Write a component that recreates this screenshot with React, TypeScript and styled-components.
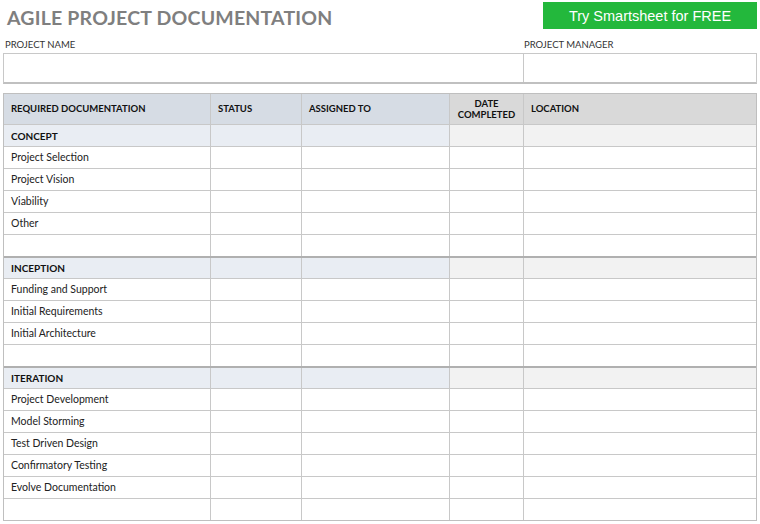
import React from "react";
import styled, { createGlobalStyle } from "styled-components";

const Global = createGlobalStyle`
  body { margin: 0; font-family: "Lato", "Liberation Sans", sans-serif; background: #fff; }
`;

const Page = styled.div`
  width: 760px;
  padding: 0 3px 0 3px;
  box-sizing: border-box;
`;

const Top = styled.div`
  display: flex;
  justify-content: space-between;
  align-items: flex-start;
  height: 34px;
  padding-top: 2px;
  box-sizing: border-box;
`;

const Title = styled.h1`
  margin: 4px 0 0 4px;
  font-size: 19.5px;
  font-weight: 700;
  color: #7f7f7f;
  letter-spacing: 0.2px;
`;

const TryButton = styled.div`
  width: 214px;
  height: 27px;
  background: #23b83c;
  color: #fff;
  font-family: "Liberation Sans", Arial, sans-serif;
  font-size: 14.5px;
  display: flex;
  align-items: center;
  justify-content: center;
`;

const Labels = styled.div`
  display: grid;
  grid-template-columns: 519px 235px;
  font-size: 9.5px;
  color: #333;
  height: 19px;
  align-items: end;
  padding-bottom: 3px;
  box-sizing: border-box;
  & > span { padding-left: 2px; }
`;

const InfoRow = styled.div`
  display: grid;
  grid-template-columns: 519px 235px;
  height: 31px;
  border: 1px solid #c8c8c8;
  border-bottom: 2px solid #c0c0c0;
  box-sizing: border-box;
  & > div + div { border-left: 1px solid #c8c8c8; }
`;

const Table = styled.div`
  margin-top: 9px;
  border: 1px solid #bfbfbf;
  border-right: 1px solid #bfbfbf;
`;

const cols = "206px 91px 148px 74px 1fr";

const Row = styled.div<{ $kind?: "head" | "section" | "item" }>`
  display: grid;
  grid-template-columns: ${cols};
  height: ${(p) => (p.$kind === "head" ? "30px" : "22px")};
  box-sizing: border-box;
  border-top: ${(p) => (p.$kind === "section" ? "2px solid #b0b0b0" : "1px solid #c8c8c8")};
  &:first-child { border-top: none; }
`;

const Cell = styled.div<{ $bg?: string; $bold?: boolean; $center?: boolean }>`
  background: ${(p) => p.$bg || "#fff"};
  border-left: 1px solid #c8c8c8;
  &:first-child { border-left: none; }
  display: flex;
  align-items: center;
  justify-content: ${(p) => (p.$center ? "center" : "flex-start")};
  text-align: ${(p) => (p.$center ? "center" : "left")};
  padding-left: ${(p) => (p.$center ? "0" : "7px")};
  font-size: ${(p) => (p.$bold ? "9.5px" : "10.5px")};
  font-weight: ${(p) => (p.$bold ? 700 : 400)};
  color: ${(p) => (p.$bold ? "#111" : "#222")};
  line-height: 1.2;
`;

const blue = "#d6dce4";
const lightBlue = "#e9edf3";
const gray = "#d9d9d9";
const lightGray = "#f2f2f2";

const sections = [
  { name: "CONCEPT", items: ["Project Selection", "Project Vision", "Viability", "Other", ""] },
  { name: "INCEPTION", items: ["Funding and Support", "Initial Requirements", "Initial Architecture", ""] },
  {
    name: "ITERATION",
    items: ["Project Development", "Model Storming", "Test Driven Design", "Confirmatory Testing", "Evolve Documentation", ""],
  },
];

export default function App() {
  return (
    <Page>
      <Global />
      <Top>
        <Title>AGILE PROJECT DOCUMENTATION</Title>
        <TryButton>Try Smartsheet for FREE</TryButton>
      </Top>
      <Labels>
        <span>PROJECT NAME</span>
        <span>PROJECT MANAGER</span>
      </Labels>
      <InfoRow>
        <div />
        <div />
      </InfoRow>
      <Table>
        <Row $kind="head">
          <Cell $bg={blue} $bold>REQUIRED DOCUMENTATION</Cell>
          <Cell $bg={blue} $bold>STATUS</Cell>
          <Cell $bg={blue} $bold>ASSIGNED TO</Cell>
          <Cell $bg={gray} $bold $center>DATE<br />COMPLETED</Cell>
          <Cell $bg={gray} $bold>LOCATION</Cell>
        </Row>
        {sections.map((s) => (
          <React.Fragment key={s.name}>
            <Row $kind={s.name === "CONCEPT" ? "item" : "section"}>
              <Cell $bg={lightBlue} $bold style={{ fontSize: "10px" }}>{s.name}</Cell>
              <Cell $bg={lightBlue} />
              <Cell $bg={lightBlue} />
              <Cell $bg={lightGray} />
              <Cell $bg={lightGray} />
            </Row>
            {s.items.map((it, i) => (
              <Row key={i} $kind="item">
                <Cell>{it}</Cell>
                <Cell />
                <Cell />
                <Cell />
                <Cell />
              </Row>
            ))}
          </React.Fragment>
        ))}
      </Table>
    </Page>
  );
}
